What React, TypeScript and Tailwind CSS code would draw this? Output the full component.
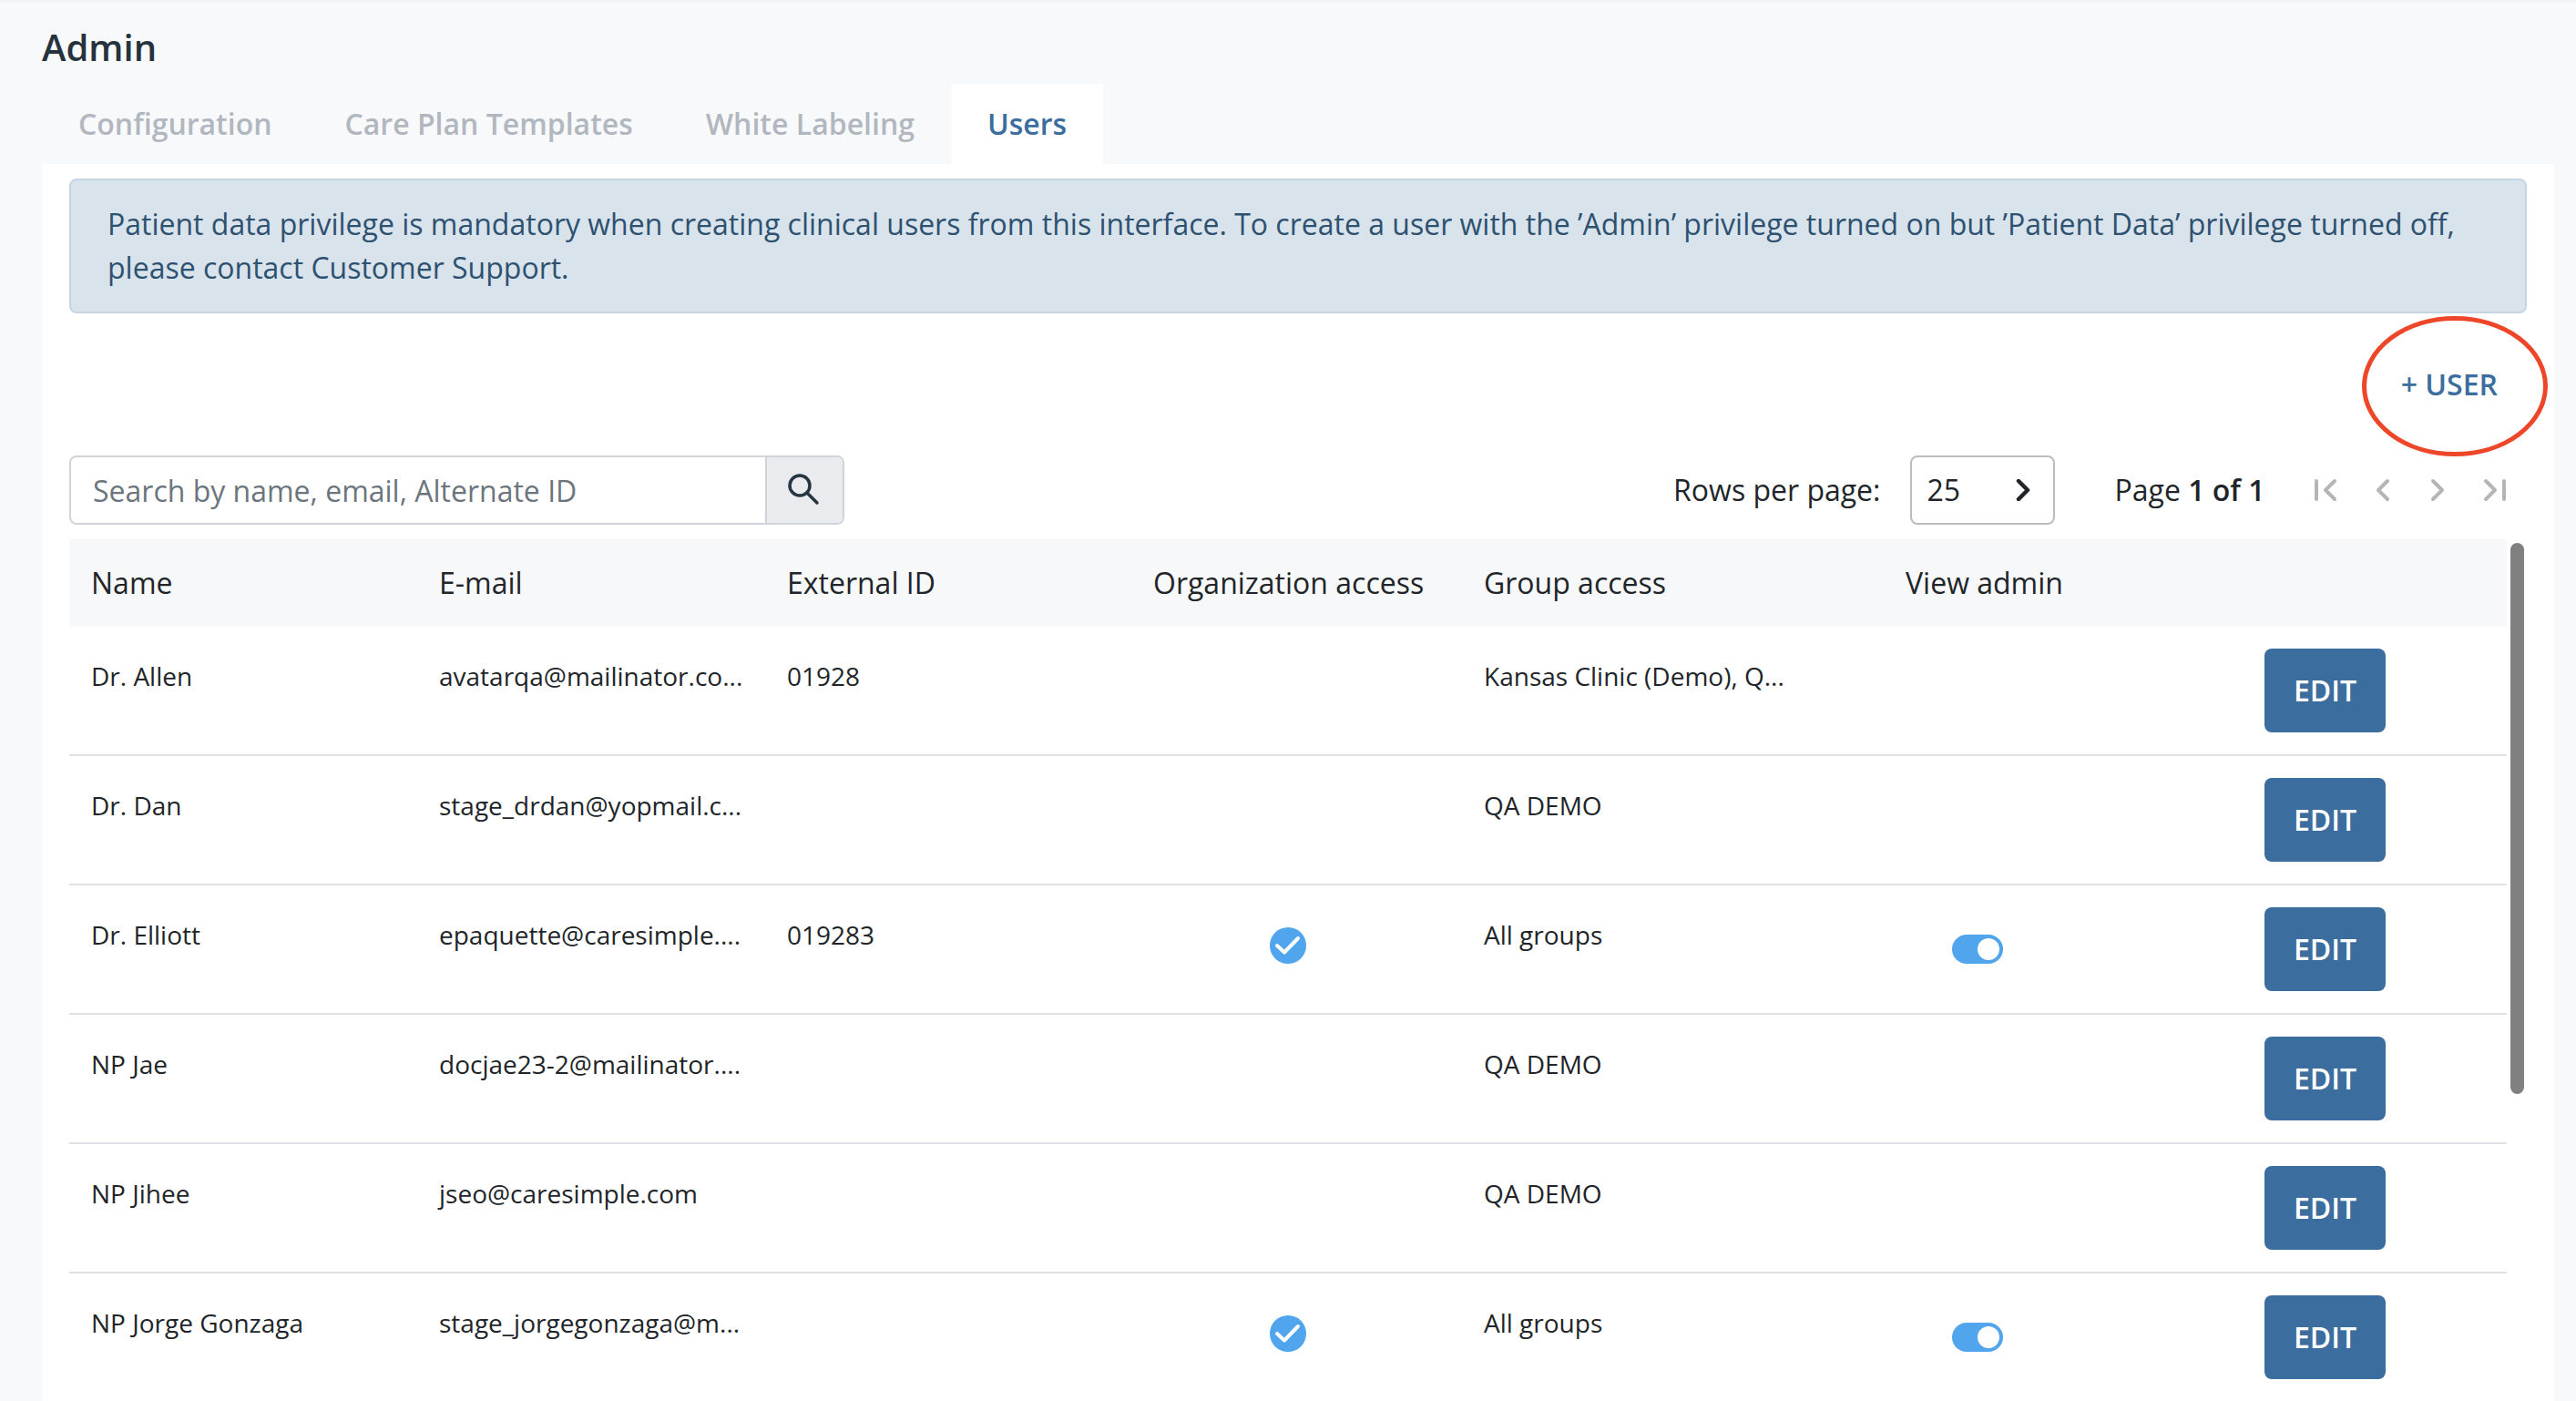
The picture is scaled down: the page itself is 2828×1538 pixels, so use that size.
const users = [
  { name: "Dr. Allen", email: "avatarqa@mailinator.co...", externalId: "01928", groups: "Kansas Clinic (Demo), Q...", access: false },
  { name: "Dr. Dan", email: "stage_drdan@yopmail.c...", externalId: "", groups: "QA DEMO", access: false },
  { name: "Dr. Elliott", email: "epaquette@caresimple....", externalId: "019283", groups: "All groups", access: true },
  { name: "NP Jae", email: "docjae23-2@mailinator....", externalId: "", groups: "QA DEMO", access: false },
  { name: "NP Jihee", email: "jseo@caresimple.com", externalId: "", groups: "QA DEMO", access: false },
  { name: "NP Jorge Gonzaga", email: "stage_jorgegonzaga@m...", externalId: "", groups: "All groups", access: true },
];

const tabs = ["Configuration", "Care Plan Templates", "White Labeling"];

const columns = "grid grid-cols-[382px_382px_402px_363px_463px_394px_1fr]";

function PageIcon({ d }: { d: string }) {
  return (
    <svg viewBox="0 0 32 32" className="w-8 h-8" fill="none" stroke="#b5b5b5" strokeWidth="4" strokeLinecap="round" strokeLinejoin="round">
      <path d={d} />
    </svg>
  );
}

function CheckBadge() {
  return (
    <svg viewBox="0 0 40 40" className="w-10 h-10">
      <circle cx="20" cy="20" r="20" fill="#50a5ec" />
      <path d="M8 20l8 7.5L31 12" fill="none" stroke="#fff" strokeWidth="4" strokeLinecap="round" strokeLinejoin="round" />
    </svg>
  );
}

export default function App() {
  return (
    <div className="h-[1538px] overflow-hidden bg-[#f8f9fb] font-['Open_Sans',sans-serif] text-[#212529]">
      <div className="h-1 bg-gradient-to-b from-[#f0f1f3] to-[#f8f9fb]" />

      {/* Header */}
      <h1 className="h-[88px] pl-[46px] pt-[21px] text-[40px] leading-[54px] font-semibold text-[#26333d]">Admin</h1>

      {/* Tabs */}
      <div className="flex h-[88px] pl-[46px]">
        {tabs.map((tab) => (
          <div key={tab} className="px-[40px] pt-[22px] text-[32px] leading-[44px] font-semibold text-[#b1b7bf]">
            {tab}
          </div>
        ))}
        <div className="px-[40px] pt-[22px] text-[32px] leading-[44px] font-semibold text-[#3b6d9e] bg-white">Users</div>
      </div>

      {/* Panel */}
      <div className="relative ml-[46px] w-[2758px] h-[1358px] bg-white px-[30px] pt-4">
        <div className="h-[148px] rounded-lg border-2 border-[#c5d5e3] bg-[#d8e3ec] px-[40px] py-[24px] text-[32px] leading-[48px] text-[#2e5170]">
          Patient data privilege is mandatory when creating clinical users from this interface. To create a user with the ’Admin’ privilege turned on but ’Patient Data’ privilege turned off, please contact Customer Support.
        </div>

        <div className="relative flex h-[156px] items-center justify-end pr-[32px]">
          <button className="text-[32px] font-semibold text-[#3b6d9e]">+ USER</button>
          <svg viewBox="0 0 204 154" className="absolute right-[-23px] top-[3px] w-[204px] h-[154px]" fill="none">
            <ellipse cx="102" cy="77" rx="99.5" ry="74.5" stroke="#ee4628" strokeWidth="5" />
          </svg>
        </div>

        {/* Toolbar */}
        <div className="flex h-[76px] items-center justify-between">
          <div className="flex h-full w-[851px] rounded-lg border-2 border-[#ced4da] overflow-hidden">
            <div className="flex-1 pl-[24px] pt-[2px] flex items-center text-[32px] text-[#6c757d]">Search by name, email, Alternate ID</div>
            <div className="flex w-[85px] items-center justify-center border-l-2 border-[#ced4da] bg-[#e9ebef]">
              <svg viewBox="0 0 40 40" className="w-10 h-10" fill="none" stroke="#263540" strokeWidth="3.5" strokeLinecap="round">
                <circle cx="14" cy="15" r="11" />
                <path d="M22 23l11 11" />
              </svg>
            </div>
          </div>
          <div className="flex h-full items-center pr-[19px]">
            <span className="text-[32px]">Rows per page:</span>
            <div className="ml-[33px] flex h-full w-[159px] items-center justify-between rounded-lg border-2 border-[#bdbdbd] pl-[16px] pr-[25px]">
              <span className="text-[32px]">25</span>
              <svg viewBox="0 0 16 24" className="w-4 h-6" fill="none" stroke="#212529" strokeWidth="4.5" strokeLinecap="round" strokeLinejoin="round">
                <path d="M3 2l10 10L3 22" />
              </svg>
            </div>
            <span className="ml-[65px] text-[32px]">
              Page <span className="font-semibold">1 of 1</span>
            </span>
            <div className="ml-[50.5px] flex gap-[30px]">
              <PageIcon d="M6 6v20M26 6L16 16l10 10" />
              <PageIcon d="M22 6L12 16l10 10" />
              <PageIcon d="M10 6l10 10-10 10" />
              <PageIcon d="M6 6l10 10L6 26M26 6v20" />
            </div>
          </div>
        </div>

        {/* Table */}
        <div className="relative mt-4 w-[2676px]">
          <div className={`${columns} h-[95.5px] items-center bg-[#f7f8fa] text-[32px]`}>
            <div className="pl-6">Name</div>
            <div className="pl-6">E-mail</div>
            <div className="pl-6">External ID</div>
            <div className="pl-6">Organization access</div>
            <div className="pl-6">Group access</div>
            <div className="pl-6">View admin</div>
            <div />
          </div>
          {users.map((user) => (
            <div key={user.name} className={`${columns} h-[142px] border-b-2 border-[#dee2e6] text-[28px] leading-[38px]`}>
              <div className="pl-6 pt-[35px]">{user.name}</div>
              <div className="pl-6 pt-[35px]">{user.email}</div>
              <div className="pl-6 pt-[35px]">{user.externalId}</div>
              <div className="pl-[152px] pt-[46.5px]">{user.access && <CheckBadge />}</div>
              <div className="pl-6 pt-[35px]">{user.groups}</div>
              <div className="pl-[75px] pt-[54.5px]">
                {user.access && (
                  <div className="flex h-8 w-14 items-center justify-end rounded-full bg-[#50a5ec] pr-1">
                    <div className="h-6 w-6 rounded-full bg-white" />
                  </div>
                )}
              </div>
              <div className="pl-6 pt-[24.5px]">
                <button className="h-[92px] w-[133px] rounded-lg bg-[#3b6d9e] text-[32px] font-semibold text-white">EDIT</button>
              </div>
            </div>
          ))}
          <div className="absolute left-[2680px] top-1 h-[605px] w-[15px] rounded-full bg-[#808080]" />
        </div>
      </div>
    </div>
  );
}
